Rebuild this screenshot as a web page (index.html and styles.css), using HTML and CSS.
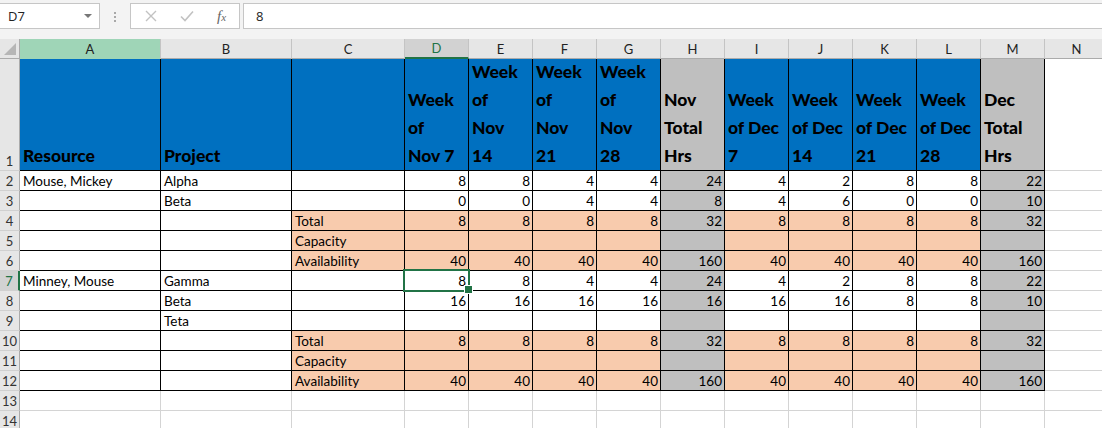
FILE: index.html
```html
<!DOCTYPE html>
<html lang="en">
<head>
  <meta charset="UTF-8">
  <title>Resource Plan</title>
  <link rel="stylesheet" href="styles.css">
</head>
<body>
  <div class="formula-bar">
    <div class="name-box">
      <span>D7</span>
      <span class="caret"></span>
    </div>
    <div class="grip"><i></i><i></i><i></i></div>
    <div class="fx-box">
      <svg width="12" height="12" viewBox="0 0 12 12"><path d="M1 1L11 11M11 1L1 11" stroke="#c2c2c2" stroke-width="1.4" fill="none"/></svg>
      <svg width="14" height="12" viewBox="0 0 14 12"><path d="M1 6.5L5 10.5L13 1.5" stroke="#c2c2c2" stroke-width="1.6" fill="none"/></svg>
      <span class="fx">f<small>x</small></span>
    </div>
    <div class="formula-input">8</div>
  </div>

  <div class="sheet">
    <div class="row col-heads">
      <div class="corner"><span class="tri"></span></div>
      <div class="ch picked">A</div>
      <div class="ch">B</div>
      <div class="ch">C</div>
      <div class="ch current">D</div>
      <div class="ch">E</div>
      <div class="ch">F</div>
      <div class="ch">G</div>
      <div class="ch">H</div>
      <div class="ch">I</div>
      <div class="ch">J</div>
      <div class="ch">K</div>
      <div class="ch">L</div>
      <div class="ch">M</div>
      <div class="ch">N</div>
    </div>

    <div class="row head boxed">
      <div class="rh">1</div>
      <div class="cell">Resource</div>
      <div class="cell">Project</div>
      <div class="cell"></div>
      <div class="cell">Week<br>of<br>Nov 7</div>
      <div class="cell">Week<br>of<br>Nov<br>14</div>
      <div class="cell">Week<br>of<br>Nov<br>21</div>
      <div class="cell">Week<br>of<br>Nov<br>28</div>
      <div class="cell">Nov<br>Total<br>Hrs</div>
      <div class="cell">Week<br>of Dec<br>7</div>
      <div class="cell">Week<br>of Dec<br>14</div>
      <div class="cell">Week<br>of Dec<br>21</div>
      <div class="cell">Week<br>of Dec<br>28</div>
      <div class="cell">Dec<br>Total<br>Hrs</div>
      <div class="cell"></div>
    </div>

    <div class="row boxed">
      <div class="rh">2</div>
      <div class="cell">Mouse, Mickey</div>
      <div class="cell">Alpha</div>
      <div class="cell"></div>
      <div class="cell">8</div><div class="cell">8</div><div class="cell">4</div><div class="cell">4</div>
      <div class="cell">24</div>
      <div class="cell">4</div><div class="cell">2</div><div class="cell">8</div><div class="cell">8</div>
      <div class="cell">22</div>
      <div class="cell"></div>
    </div>

    <div class="row boxed">
      <div class="rh">3</div>
      <div class="cell"></div>
      <div class="cell">Beta</div>
      <div class="cell"></div>
      <div class="cell">0</div><div class="cell">0</div><div class="cell">4</div><div class="cell">4</div>
      <div class="cell">8</div>
      <div class="cell">4</div><div class="cell">6</div><div class="cell">0</div><div class="cell">0</div>
      <div class="cell">10</div>
      <div class="cell"></div>
    </div>

    <div class="row boxed sum">
      <div class="rh">4</div>
      <div class="cell"></div>
      <div class="cell"></div>
      <div class="cell">Total</div>
      <div class="cell">8</div><div class="cell">8</div><div class="cell">8</div><div class="cell">8</div>
      <div class="cell">32</div>
      <div class="cell">8</div><div class="cell">8</div><div class="cell">8</div><div class="cell">8</div>
      <div class="cell">32</div>
      <div class="cell"></div>
    </div>

    <div class="row boxed sum">
      <div class="rh">5</div>
      <div class="cell"></div>
      <div class="cell"></div>
      <div class="cell">Capacity</div>
      <div class="cell"></div><div class="cell"></div><div class="cell"></div><div class="cell"></div>
      <div class="cell"></div>
      <div class="cell"></div><div class="cell"></div><div class="cell"></div><div class="cell"></div>
      <div class="cell"></div>
      <div class="cell"></div>
    </div>

    <div class="row boxed sum">
      <div class="rh">6</div>
      <div class="cell"></div>
      <div class="cell"></div>
      <div class="cell">Availability</div>
      <div class="cell">40</div><div class="cell">40</div><div class="cell">40</div><div class="cell">40</div>
      <div class="cell">160</div>
      <div class="cell">40</div><div class="cell">40</div><div class="cell">40</div><div class="cell">40</div>
      <div class="cell">160</div>
      <div class="cell"></div>
    </div>

    <div class="row boxed">
      <div class="rh on">7</div>
      <div class="cell">Minney, Mouse</div>
      <div class="cell">Gamma</div>
      <div class="cell"></div>
      <div class="cell active">8</div><div class="cell">8</div><div class="cell">4</div><div class="cell">4</div>
      <div class="cell">24</div>
      <div class="cell">4</div><div class="cell">2</div><div class="cell">8</div><div class="cell">8</div>
      <div class="cell">22</div>
      <div class="cell"></div>
    </div>

    <div class="row boxed">
      <div class="rh">8</div>
      <div class="cell"></div>
      <div class="cell">Beta</div>
      <div class="cell"></div>
      <div class="cell">16</div><div class="cell">16</div><div class="cell">16</div><div class="cell">16</div>
      <div class="cell">16</div>
      <div class="cell">16</div><div class="cell">16</div><div class="cell">8</div><div class="cell">8</div>
      <div class="cell">10</div>
      <div class="cell"></div>
    </div>

    <div class="row boxed">
      <div class="rh">9</div>
      <div class="cell"></div>
      <div class="cell">Teta</div>
      <div class="cell"></div>
      <div class="cell"></div><div class="cell"></div><div class="cell"></div><div class="cell"></div>
      <div class="cell"></div>
      <div class="cell"></div><div class="cell"></div><div class="cell"></div><div class="cell"></div>
      <div class="cell"></div>
      <div class="cell"></div>
    </div>

    <div class="row boxed sum">
      <div class="rh">10</div>
      <div class="cell"></div>
      <div class="cell"></div>
      <div class="cell">Total</div>
      <div class="cell">8</div><div class="cell">8</div><div class="cell">8</div><div class="cell">8</div>
      <div class="cell">32</div>
      <div class="cell">8</div><div class="cell">8</div><div class="cell">8</div><div class="cell">8</div>
      <div class="cell">32</div>
      <div class="cell"></div>
    </div>

    <div class="row boxed sum">
      <div class="rh">11</div>
      <div class="cell"></div>
      <div class="cell"></div>
      <div class="cell">Capacity</div>
      <div class="cell"></div><div class="cell"></div><div class="cell"></div><div class="cell"></div>
      <div class="cell"></div>
      <div class="cell"></div><div class="cell"></div><div class="cell"></div><div class="cell"></div>
      <div class="cell"></div>
      <div class="cell"></div>
    </div>

    <div class="row boxed sum">
      <div class="rh">12</div>
      <div class="cell"></div>
      <div class="cell"></div>
      <div class="cell">Availability</div>
      <div class="cell">40</div><div class="cell">40</div><div class="cell">40</div><div class="cell">40</div>
      <div class="cell">160</div>
      <div class="cell">40</div><div class="cell">40</div><div class="cell">40</div><div class="cell">40</div>
      <div class="cell">160</div>
      <div class="cell"></div>
    </div>

    <div class="row">
      <div class="rh">13</div>
      <div class="cell"></div><div class="cell"></div><div class="cell"></div>
      <div class="cell"></div><div class="cell"></div><div class="cell"></div><div class="cell"></div>
      <div class="cell"></div>
      <div class="cell"></div><div class="cell"></div><div class="cell"></div><div class="cell"></div>
      <div class="cell"></div>
      <div class="cell"></div>
    </div>

    <div class="row">
      <div class="rh">14</div>
      <div class="cell"></div><div class="cell"></div><div class="cell"></div>
      <div class="cell"></div><div class="cell"></div><div class="cell"></div><div class="cell"></div>
      <div class="cell"></div>
      <div class="cell"></div><div class="cell"></div><div class="cell"></div><div class="cell"></div>
      <div class="cell"></div>
      <div class="cell"></div>
    </div>
  </div>
</body>
</html>
```

FILE: styles.css
```css
* {
  box-sizing: border-box;
}

body {
  margin: 0;
  width: 1102px;
  height: 428px;
  overflow: hidden;
  background: #fff;
  font-family: "Lato", "Open Sans", sans-serif;
  font-size: 13.5px;
  color: #000;
}

/* formula bar */
.formula-bar {
  display: flex;
  align-items: flex-start;
  height: 39px;
  padding-top: 3px;
  background: #f3f3f3;
}

.name-box {
  display: flex;
  align-items: center;
  justify-content: space-between;
  width: 101px;
  height: 26px;
  margin-left: -1px;
  padding: 0 7px 0 8px;
  background: #fff;
  border: 1px solid #c6c6c6;
  font-family: "Open Sans", sans-serif;
  font-size: 13px;
  color: #222;
}

.caret {
  width: 0;
  height: 0;
  border-left: 4px solid transparent;
  border-right: 4px solid transparent;
  border-top: 4px solid #777;
}

.grip {
  display: flex;
  flex-direction: column;
  gap: 2px;
  width: 30px;
  padding: 9px 0 0 14px;
}

.grip i {
  width: 2px;
  height: 2px;
  background: #a8a8a8;
}

.fx-box {
  display: flex;
  align-items: center;
  width: 110px;
  height: 26px;
  padding-left: 14px;
  background: #fff;
  border: 1px solid #c6c6c6;
}

.fx-box svg {
  margin-right: 23px;
}

.fx {
  font-family: "Liberation Serif", serif;
  font-style: italic;
  font-size: 15px;
  color: #666;
}

.fx small {
  font-size: 11px;
}

.formula-input {
  flex: 1;
  height: 26px;
  margin-left: 3px;
  padding: 3px 0 0 12px;
  background: #fff;
  border: 1px solid #c6c6c6;
  border-right: 0;
  font-family: "Open Sans", sans-serif;
  font-size: 13px;
  color: #222;
}

/* grid */
.row {
  display: grid;
  grid-template-columns: 20px 141px 131px 113px repeat(11, 64px);
  height: 20px;
}

.row.head {
  height: 112px;
}

.corner {
  display: flex;
  align-items: flex-end;
  justify-content: flex-end;
  padding: 0 3px 3px 0;
  background: #e6e6e6;
  border-right: 1px solid #ababab;
  border-bottom: 1px solid #ababab;
}

.tri {
  width: 0;
  height: 0;
  border-left: 12px solid transparent;
  border-bottom: 12px solid #b6b6b6;
}

.ch {
  display: flex;
  align-items: center;
  justify-content: center;
  background: #e6e6e6;
  border-right: 1px solid #c4c4c4;
  border-bottom: 1px solid #ababab;
  font-size: 13px;
  color: #222;
}

.ch.picked {
  background: #9fd5b7;
  border-bottom-color: #9fd5b7;
}

.ch.current {
  background: #d2d2d2;
  border-bottom: 2px solid #217346;
  color: #217346;
}

.rh {
  display: flex;
  align-items: flex-end;
  justify-content: center;
  padding-bottom: 1px;
  background: #e6e6e6;
  border-right: 1px solid #ababab;
  border-bottom: 1px solid #d0d0d0;
  font-size: 13px;
  color: #333;
}

.rh.on {
  background: #d2d2d2;
  color: #217346;
  border-right: 2px solid #217346;
}

.cell {
  display: flex;
  align-items: flex-end;
  padding: 0 2px 1px 3px;
  border-right: 1px solid #d4d4d4;
  border-bottom: 1px solid #d4d4d4;
  white-space: nowrap;
  overflow: hidden;
}

.row > .cell:nth-child(n+5) {
  justify-content: flex-end;
}

.boxed > .cell {
  border-color: #000;
}

/* header row */
.head > .cell {
  background: #0070c0;
}

.head > .cell:nth-child(n+2) {
  justify-content: flex-start;
  padding: 0 1px 0 3px;
  font-weight: 900;
  font-size: 17.5px;
  line-height: 28px;
}

/* fills */
.sum > .cell:nth-child(n+4) {
  background: #f8cbad;
}

.boxed > .cell:nth-child(9),
.boxed > .cell:nth-child(14) {
  background: #bfbfbf;
}

.row > .cell:nth-child(15) {
  background: #fff;
  border-color: #d4d4d4;
}

/* selected cell */
.cell.active {
  position: relative;
  overflow: visible;
}

.cell.active::before {
  content: "";
  position: absolute;
  top: -2px;
  left: -2px;
  right: -2px;
  bottom: -2px;
  border: 2px solid #217346;
}

.cell.active::after {
  content: "";
  position: absolute;
  right: -5px;
  bottom: -4px;
  width: 7px;
  height: 7px;
  background: #217346;
  border: 1px solid #fff;
}
```
